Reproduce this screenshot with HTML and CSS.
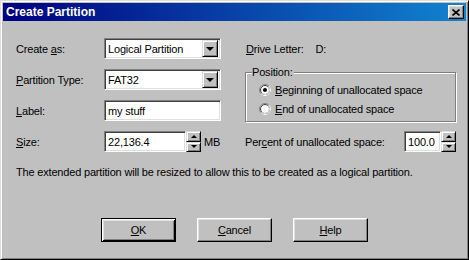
FILE: index.html
```html
<!DOCTYPE html>
<html>
<head>
<meta charset="utf-8">
<title>Create Partition</title>
<link rel="stylesheet" href="styles.css">
</head>
<body>
<div class="window">
  <div class="titlebar">
    <span class="title">Create Partition</span>
    <span class="close"><svg width="8" height="7" viewBox="0 0 8 7"><path d="M0.5 0.5 L7.5 6.5 M7.5 0.5 L0.5 6.5" stroke="#000" stroke-width="1.6" fill="none"/></svg></span>
  </div>
  <div class="content">
    <div class="grid">
      <span class="lbl row1">Create <u>a</u>s:</span>
      <div class="combo row1"><span class="val">Logical Partition</span><span class="dd"><i class="tri-down"></i></span></div>
      <div class="drive row1"><span><u>D</u>rive Letter:</span><span class="dl">D:</span></div>

      <span class="lbl row2"><u>P</u>artition Type:</span>
      <div class="combo row2"><span class="val">FAT32</span><span class="dd"><i class="tri-down"></i></span></div>

      <fieldset class="group">
        <legend>Position:</legend>
        <div class="radio-row">
          <svg class="radio" width="12" height="12" viewBox="0 0 12 12"><circle cx="6" cy="6" r="5.5" fill="#fff" stroke="#808080"/><path d="M9.9 2.1 A5.5 5.5 0 0 1 2.1 9.9" stroke="#fff" fill="none"/><circle cx="6" cy="6" r="4.5" fill="none" stroke="#404040"/><path d="M9.2 2.8 A4.5 4.5 0 0 1 2.8 9.2" stroke="#dfdfdf" fill="none"/><circle cx="6" cy="6" r="2" fill="#000"/></svg>
          <span><u>B</u>eginning of unallocated space</span>
        </div>
        <div class="radio-row">
          <svg class="radio" width="12" height="12" viewBox="0 0 12 12"><circle cx="6" cy="6" r="5.5" fill="#fff" stroke="#808080"/><path d="M9.9 2.1 A5.5 5.5 0 0 1 2.1 9.9" stroke="#fff" fill="none"/><circle cx="6" cy="6" r="4.5" fill="none" stroke="#404040"/><path d="M9.2 2.8 A4.5 4.5 0 0 1 2.8 9.2" stroke="#dfdfdf" fill="none"/></svg>
          <span><u>E</u>nd of unallocated space</span>
        </div>
      </fieldset>

      <span class="lbl row3"><u>L</u>abel:</span>
      <div class="field row3 label-field">my stuff</div>

      <span class="lbl row4"><u>S</u>ize:</span>
      <div class="size row4">
        <div class="field size-field">22,136.4</div>
        <div class="spin"><span class="sb"><i class="tri-up-s"></i></span><span class="sb"><i class="tri-down-s"></i></span></div>
        <span class="unit">MB</span>
      </div>

      <div class="percent row4">
        <span>Per<u>c</u>ent of unallocated space:</span>
        <div class="pbox">
          <div class="field pct-field">100.0</div>
          <div class="spin"><span class="sb"><i class="tri-up-s"></i></span><span class="sb"><i class="tri-down-s"></i></span></div>
        </div>
      </div>
    </div>

    <p class="msg">The extended partition will be resized to allow this to be created as a logical partition.</p>

    <div class="buttons">
      <span class="btn default"><u>O</u>K</span>
      <span class="btn"><u>C</u>ancel</span>
      <span class="btn"><u>H</u>elp</span>
    </div>
  </div>
</div>
</body>
</html>
```

FILE: styles.css
```css
* { box-sizing: border-box; }
html, body { margin: 0; padding: 0; background: #c0c0c0; }
body {
  font-family: "Liberation Sans", Arial, sans-serif;
  font-size: 11px;
  letter-spacing: -0.18px;
  color: #000;
}
u { text-decoration: underline; text-underline-offset: 1px; }

.window {
  width: 469px;
  height: 260px;
  background: #c0c0c0;
  border: 1px solid;
  border-color: #dfdfdf #000 #000 #dfdfdf;
  box-shadow: inset 1px 1px #fff, inset -1px -1px #808080;
  padding: 2px;
  display: flex;
  flex-direction: column;
}

.titlebar {
  height: 18px;
  display: flex;
  align-items: center;
  padding-left: 3px;
  padding-right: 2px;
  background: linear-gradient(to right, #000080 0%, #1084d0 100%);
}
.title {
  color: #fff;
  font-weight: bold;
  font-size: 12px;
  letter-spacing: 0;
}
.close {
  margin-left: auto;
  width: 16px;
  height: 14px;
  background: #c0c0c0;
  border: 1px solid;
  border-color: #fff #000 #000 #fff;
  box-shadow: inset -1px -1px #808080, inset 1px 1px #dfdfdf;
  display: flex;
  align-items: center;
  justify-content: center;
}
.close svg { display: block; margin-left: -1px; }

.content {
  padding: 17px 0 0 13px;
  flex: 1;
  display: flex;
  flex-direction: column;
}

.grid {
  display: grid;
  grid-template-columns: 88px 117px 24px 211px;
  grid-template-rows: 21px 21px 21px 21px;
  row-gap: 10px;
}
.row1 { grid-row: 1; }
.row2 { grid-row: 2; }
.row3 { grid-row: 3; }
.row4 { grid-row: 4; }

.lbl {
  grid-column: 1;
  align-self: center;
}

.combo {
  grid-column: 2;
  background: #fff;
  border: 1px solid;
  border-color: #808080 #fff #fff #808080;
  box-shadow: inset 1px 1px #404040, inset -1px -1px #dfdfdf;
  padding: 2px;
  display: flex;
  align-items: center;
}
.combo .val { flex: 1; padding-left: 1px; }
.dd {
  width: 16px;
  height: 17px;
  background: #c0c0c0;
  border: 1px solid;
  border-color: #dfdfdf #000 #000 #dfdfdf;
  box-shadow: inset 1px 1px #fff, inset -1px -1px #808080;
  display: flex;
  align-items: center;
  justify-content: center;
}
.tri-down {
  display: block;
  width: 0; height: 0;
  border-left: 4px solid transparent;
  border-right: 4px solid transparent;
  border-top: 4px solid #000;
  margin-left: -1px;
}

.field {
  background: #fff;
  border: 1px solid;
  border-color: #808080 #fff #fff #808080;
  box-shadow: inset 1px 1px #404040, inset -1px -1px #dfdfdf;
  padding: 0 3px;
  display: flex;
  align-items: center;
  height: 21px;
}
.label-field { grid-column: 2; }

.size {
  grid-column: 2 / 4;
  display: flex;
  align-items: center;
}
.size-field { width: 82px; }
.spin {
  width: 15px;
  height: 21px;
  display: flex;
  flex-direction: column;
}
.sb {
  flex: 1;
  background: #c0c0c0;
  border: 1px solid;
  border-color: #dfdfdf #000 #000 #dfdfdf;
  box-shadow: inset 1px 1px #fff, inset -1px -1px #808080;
  display: flex;
  align-items: center;
  justify-content: center;
}
.tri-up-s, .tri-down-s {
  display: block;
  width: 0; height: 0;
  border-left: 3px solid transparent;
  border-right: 3px solid transparent;
}
.tri-up-s { border-bottom: 3px solid #000; }
.tri-down-s { border-top: 3px solid #000; }
.unit { margin-left: 3px; }

.drive {
  grid-column: 4;
  align-self: center;
  display: flex;
  padding-left: 1px;
}
.dl { margin-left: 12px; }

.group {
  grid-column: 4;
  grid-row: 2 / 4;
  margin: -3px 0 0 0;
  padding: 0 0 0 13px;
  height: 56px;
  border: 1px solid #808080;
  box-shadow: inset 1px 1px #fff, 1px 1px #fff;
}
.group legend {
  padding: 0 1px 0 0;
  margin-left: -7px;
  line-height: 13px;
  background: #c0c0c0;
}
.radio-row {
  display: flex;
  align-items: center;
  height: 19px;
}
.radio-row:first-of-type { margin-top: 1px; }
.radio { display: block; margin-right: 4px; flex: none; }

.percent {
  grid-column: 4;
  display: flex;
  align-items: center;
}
.pbox { margin-left: auto; display: flex; }
.pct-field { width: 37px; }

.msg {
  margin: 14px 0 0 0;
  line-height: 13px;
}

.buttons {
  margin-top: 39px;
  display: flex;
  justify-content: center;
  gap: 21px;
  padding-right: 13px;
}
.btn {
  width: 75px;
  height: 24px;
  display: flex;
  align-items: center;
  justify-content: center;
  border: 1px solid;
  border-color: #fff #000 #000 #fff;
  box-shadow: inset -1px -1px #808080, inset 1px 1px #dfdfdf;
}
.btn.default {
  border-color: #000;
  box-shadow: inset 1px 1px #fff, inset -1px -1px #000, inset 2px 2px #dfdfdf, inset -2px -2px #808080;
}
```
